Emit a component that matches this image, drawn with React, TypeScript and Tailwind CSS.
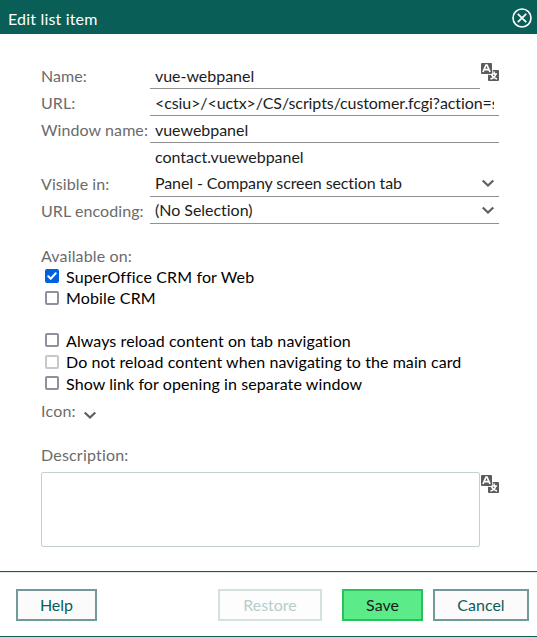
import type { ReactNode } from "react";

function TranslateIcon() {
  return (
    <svg width="18" height="18" viewBox="0 0 18 18" className="block">
      <rect x="7" y="7" width="11" height="11" rx="1" fill="#5c5c5c" />
      <path d="M8 11h8M12.800 8.500l.8 2M14.800 11c-.6 2.300-2.400 4.200-5.300 5M10.500 11.500c.8 2 2.500 3.600 5.500 4.500" stroke="#fff" strokeWidth="1.400" fill="none" />
      <path d="M-1-1H11.700V10.500L10.500 11.700H-1Z" fill="#fff" />
      <rect x="0" y="0" width="11" height="11" rx="1" fill="#5c5c5c" />
      <path d="M2 9L5 2h1l3 7M3.200 6.700h4.600" stroke="#fff" strokeWidth="1.700" fill="none" />
    </svg>
  );
}

function Chevron() {
  return (
    <svg width="14" height="9" viewBox="0 0 14 9" className="block">
      <path d="M1.700 1.500L7 6.500l5.300-5" stroke="#5f5f5f" strokeWidth="2.200" fill="none" />
    </svg>
  );
}

type FieldProps = { label?: string; children: ReactNode; short?: boolean; plain?: boolean; select?: boolean; tracking?: string };

function Field({ label, children, short, plain, select, tracking = "tracking-[-0.03px]" }: FieldProps) {
  return (
    <div className="flex h-[27px]">
      <div className="w-[109px] shrink-0 whitespace-nowrap pt-[2px] tracking-[0.08px] text-[#6b6b6b]">{label}</div>
      <div
        className={`flex border-b pl-[5px] ${select ? "pt-px" : "pt-[2px]"} ${short ? "w-[330px]" : "w-[349px]"} ${plain ? "border-transparent" : "border-[#919191]"}`}
      >
        <span className={`h-6 overflow-hidden whitespace-nowrap text-[#1c1c1c] ${tracking} ${select ? "w-[326px]" : "w-[339px]"}`}>{children}</span>
        {select && <span className="pt-[8px]"><Chevron /></span>}
      </div>
      {short && <div className="pl-px pt-px"><TranslateIcon /></div>}
    </div>
  );
}

type CheckProps = { label: string; checked?: boolean; disabled?: boolean; row: string; text?: string };

function Check({ label, checked, disabled, row, text = "leading-[22px] tracking-[0.09px]" }: CheckProps) {
  return (
    <label className={`flex pl-1 ${row}`}>
      <span
        className={`mt-[3px] flex size-[14px] shrink-0 items-center justify-center rounded-[2px] border-2 ${checked ? "border-[#0060df] bg-[#0060df]" : disabled ? "border-[#c7c7cc]" : "border-[#8f8f9d]"}`}
      >
        {checked && (
          <svg width="10" height="10" viewBox="0 0 10 10" className="shrink-0">
            <path d="M1.300 5.300L3.700 7.700L8.700 2.300" stroke="#fff" strokeWidth="2" fill="none" strokeLinecap="round" strokeLinejoin="round" />
          </svg>
        )}
      </span>
      <span className={`whitespace-nowrap pl-[7px] text-black ${text}`}>{label}</span>
    </label>
  );
}

export default function App() {
  return (
    <div className="flex h-[637px] w-[537px] flex-col overflow-hidden border-b border-[#0a5e58] bg-white font-['Lato',sans-serif] text-[16px] leading-6 [font-variant-ligatures:none]">
      <header className="flex h-[34px] shrink-0 items-center justify-between bg-[#0a5e58] pl-2 pr-[5px] pt-[2px] text-white">
        <h1 className="pt-px tracking-[0.18px]">Edit list item</h1>
        <svg width="20" height="20" viewBox="0 0 20 20">
          <circle cx="10" cy="10" r="9" stroke="white" strokeWidth="1.600" fill="none" />
          <path d="M5.800 5.800l8.400 8.400M14.200 5.800l-8.400 8.400" stroke="white" strokeWidth="1.700" />
        </svg>
      </header>
      <main className="h-[537px] shrink-0 pl-[41px] pt-7">
        <Field label="Name:" short>vue-webpanel</Field>
        <Field label="URL:" tracking="tracking-[-0.09px]">&lt;csiu&gt;/&lt;uctx&gt;/CS/scripts/customer.fcgi?action=s</Field>
        <Field label="Window name:">vuewebpanel</Field>
        <Field plain>contact.vuewebpanel</Field>
        <Field label="Visible in:" select tracking="tracking-[-0.1px]">Panel - Company screen section tab</Field>
        <Field label="URL encoding:" select>(No Selection)</Field>
        <div className="mt-[21px] h-[21px] leading-[22px] tracking-[0.15px] text-[#6b6b6b]">Available on:</div>
        <Check label="SuperOffice CRM for Web" checked row="h-[22px]" text="leading-[22px] tracking-[0.14px]" />
        <Check label="Mobile CRM" row="h-[42px]" text="leading-[20px] tracking-[0.15px]" />
        <Check label="Always reload content on tab navigation" row="h-[22px]" />
        <Check label="Do not reload content when navigating to the main card" disabled row="h-[21px]" text="leading-[20px] tracking-[0.07px]" />
        <Check label="Show link for opening in separate window" row="h-[27px]" />
        <div className="flex h-[43px] text-[#6b6b6b]">
          <span className="w-[42px] leading-[22px] tracking-[0.2px]">Icon:</span>
          <span className="pt-[11px]"><Chevron /></span>
        </div>
        <div className="h-[29px] tracking-[0.2px] text-[#6b6b6b]">Description:</div>
        <div className="flex gap-px">
          <textarea className="h-[75px] w-[439px] resize-none rounded-[2px] border border-[#c5cfce] bg-white outline-none" />
          <div className="pt-[3px]"><TranslateIcon /></div>
        </div>
      </main>
      <footer className="flex h-[65px] shrink-0 border-t border-[#0a5e58] pl-4 pt-[17px] shadow-[inset_0_1px_0_#e3eceb]">
        <button className="h-8 w-[81px] border-2 border-[#6f9c99] bg-[#fbfbfb] text-[#0a5e58]">Help</button>
        <button className="ml-[121px] h-8 w-[104px] border-2 border-[#d4e1e0] bg-[#fdfdfd] text-[#b7cdcb]">Restore</button>
        <button className="ml-5 h-8 w-[81px] border-2 border-[#29c15b] bg-[#5beb88] text-[#1c1c1c]">Save</button>
        <button className="ml-[10px] h-8 w-[96px] border-2 border-[#6f9c99] bg-[#fbfbfb] text-[#0a5e58]">Cancel</button>
      </footer>
    </div>
  );
}
